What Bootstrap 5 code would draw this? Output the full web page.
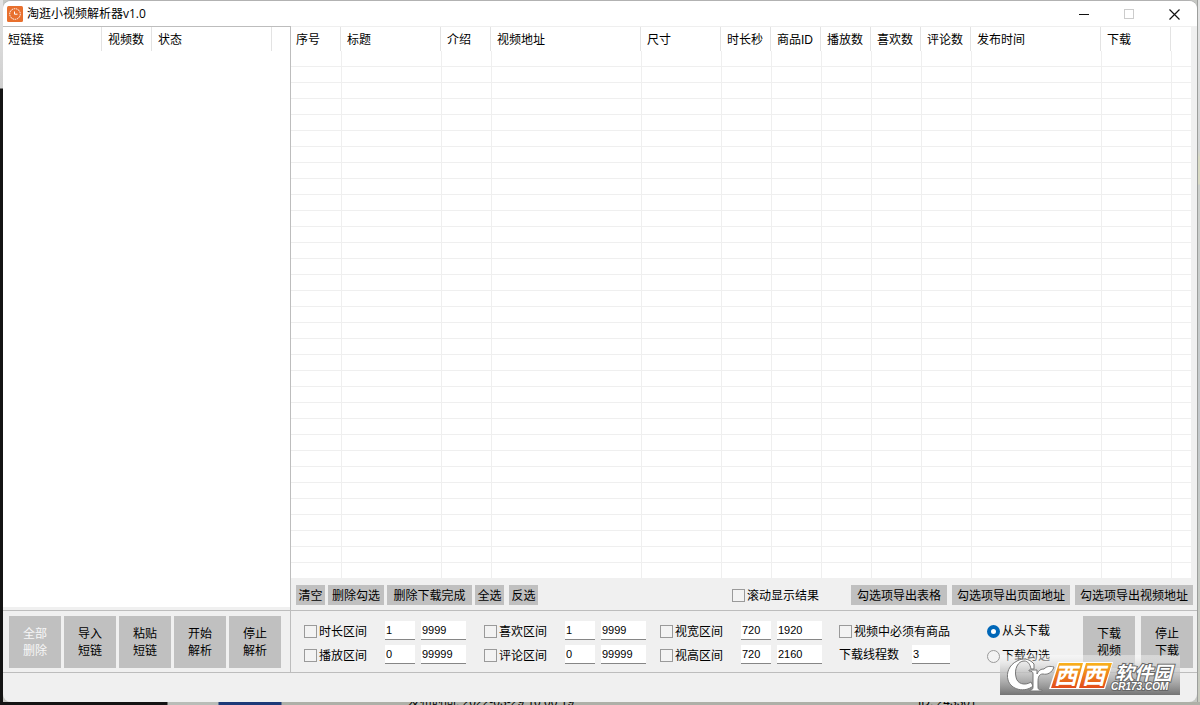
<!DOCTYPE html>
<html lang="zh-CN">
<head>
<meta charset="utf-8">
<meta name="viewport" content="width=device-width, initial-scale=1">
<title>淘逛小视频解析器v1.0</title>
<link href="https://cdn.jsdelivr.net/npm/bootstrap@5.3.0/dist/css/bootstrap.min.css" rel="stylesheet">
<style>
  body { font-family: "Liberation Sans", "Noto Sans CJK SC", sans-serif; font-size: 12px; line-height: 16px; color: #000; background: #c6c8c4; }
  .desk-left { width: 3px; background: linear-gradient(#e4e4e4, #cfcfcf 88px, #141414 89px); }
  .desk-right { width: 3px; border-left: 1px solid #9c9e9c; background: linear-gradient(#e4e4e4, #d3d5d5 150px, #d9dac4 158px, #d9dac4 184px, #cdd0cc 185px, #c4c9cc 420px, #c8cbbf); }
  .desk-bottom { height: 3px; background: linear-gradient(90deg, #141414 167px, #b9bdb8 168px, #b9bdb8 218px, #1d3a78 219px, #1d3a78 281px, #aeb0a8 282px); }
  .peek { line-height: 12px; margin-top: -6px; white-space: nowrap; }
  .peek-a { width: 510px; }
  .peek-start { margin-left: 408px; }
  .app { background: #f0f0f0; border-top: 1px solid #b2b2b2; border-radius: 8px; min-width: 0; }
  .titlebar { height: 25px; background: #fff; border-radius: 8px 8px 0 0; font-family: "Open Sans", "Noto Sans CJK SC", sans-serif; }
  .winbtn { width: 45px; height: 24px; border: 0; background: none; padding: 0; line-height: 20px; }
  .left-pane { width: 288px; border-right: 1px solid #bdbdbd; }
  .left-list { border-top: 1px solid #bdbdbd; background: #fff; margin-bottom: 3px; }
  .right-list { border-top: 1px solid #efefef; background: #fff; margin-right: 6px; }
  .listview { table-layout: fixed; width: 100%; border-collapse: separate; border-spacing: 0; }
  .listview th { height: 24px; padding: 2px 0 0 5px; font-weight: 400; white-space: nowrap; vertical-align: middle;
    background: linear-gradient(#e3e3e3, #e3e3e3) no-repeat right 1px top / 1px 100%; }
  .listview th:last-child { background: none; }
  .listview td { height: 16px; padding: 0; border-right: 1px solid #efefef; border-bottom: 1px solid #efefef; }
  .listview td:last-child { border-right: 0; }
  .listview tr:last-child td { height: 15px; border-bottom: 0; }
  .toolbar { height: 32px; padding: 1px 4px 0 5px; }
  .flat { border: 0; border-radius: 0; background: #c0c0c0; color: #000; padding: 2px 0 0; height: 20px; line-height: 18px; white-space: nowrap; }
  .gap-a { gap: 3px; } .gap-b { gap: 5px; }
  .w-s { width: 29px; } .w-m { width: 56px; } .w-l { width: 85px; } .w-x { width: 96px; } .w-xl { width: 118px; }
  .tile { width: 52px; height: 52px; line-height: 17px; }
  .tile:disabled { color: #f7f7f7; }
  .panel { height: 63px; border-top: 1px solid #bdbdbd; border-bottom: 1px solid #bdbdbd; }
  .tiles-left { padding: 5px 0 0 6px; }
  .tiles-right { padding: 5px 4px 0 0; gap: 6px; }
  .statusbar { height: 29px; }
  .tick { appearance: none; width: 13px; height: 13px; margin: 0; border: 1px solid #9a9a9a; background: #f3f3f3; flex: none; }
  .tick[type=radio] { border-radius: 50%; }
  .tick[type=radio]:checked { border: 4px solid #0067b8; background: #fff; }
  .opt { gap: 2px; white-space: nowrap; padding-top: 2px; }
  .scroll-opt { margin-right: 32px; }
  .filters { padding: 10px 0 0 13px; }
  .pair { display: grid; grid-template-columns: 75px 30px 45px; column-gap: 6px; row-gap: 5px; align-items: center; margin-right: 18px; }
  .pair + .pair { margin-right: 14px; }
  .edit { height: 19px; min-width: 0; width: 100%; border: 0; border-bottom: 1px solid #868686; padding: 0 0 1px 1px; font-size: 11px; background: #fff; color: #000; border-radius: 0; }
  .extra { display: grid; grid-template-columns: 67px 38px; column-gap: 6px; row-gap: 5px; align-items: center; margin: 0 37px 0 3px; }
  .extra > .opt { grid-column: span 2; height: 19px; }
  .modes { gap: 7px; }
  .stamp { right: 17px; bottom: 7px; pointer-events: none; }
</style>
</head>
<body class="vh-100 d-flex flex-column overflow-hidden">
<div class="d-flex flex-grow-1">
  <div class="desk-left flex-shrink-0"></div>
  <div class="app flex-grow-1 d-flex flex-column position-relative">
    <header class="titlebar d-flex align-items-center">
      <svg class="ms-1 me-1 flex-shrink-0" width="16" height="16" viewBox="0 0 16 16" aria-hidden="true">
        <rect width="16" height="16" rx="1.500" fill="#e8702e"/>
        <circle cx="8" cy="8" r="5.3" fill="none" stroke="#fff" stroke-width="1" stroke-dasharray="1.6 .7"/>
        <path d="M7.500 5.500v2.700H10.500" fill="none" stroke="#fff" stroke-width="1"/>
      </svg>
      <span class="flex-grow-1">淘逛小视频解析器v1.0</span>
      <button class="winbtn" aria-label="最小化"><svg width="11" height="11"><path d="M0 5.500h10" stroke="#111"/></svg></button>
      <button class="winbtn" aria-label="最大化" disabled><svg width="11" height="11"><rect x=".5" y=".5" width="9" height="9" fill="none" stroke="#ccc"/></svg></button>
      <button class="winbtn" aria-label="关闭"><svg width="11" height="11"><path d="M.5 .5l10 10M10.500 .5l-10 10" stroke="#111" stroke-width="1.2"/></svg></button>
    </header>

    <main class="flex-grow-1 d-flex">
      <section class="left-pane flex-shrink-0 d-flex">
        <div class="left-list flex-grow-1">
          <table class="listview">
            <colgroup><col style="width:100px"><col style="width:50px"><col style="width:120px"><col></colgroup>
            <thead><tr><th>短链接</th><th>视频数</th><th>状态</th><th></th></tr></thead>
          </table>
        </div>
      </section>
      <section class="flex-grow-1 d-flex flex-column">
        <div class="right-list flex-grow-1">
          <table class="listview" id="videos">
            <colgroup><col style="width:51px"><col style="width:100px"><col style="width:50px"><col style="width:150px"><col style="width:80px"><col style="width:50px"><col style="width:50px"><col style="width:50px"><col style="width:50px"><col style="width:50px"><col style="width:130px"><col style="width:70px"><col></colgroup>
            <thead><tr><th>序号</th><th>标题</th><th>介绍</th><th>视频地址</th><th>尺寸</th><th>时长秒</th><th>商品ID</th><th>播放数</th><th>喜欢数</th><th>评论数</th><th>发布时间</th><th>下载</th><th></th></tr></thead>
            <tbody></tbody>
          </table>
        </div>
        <div class="toolbar d-flex align-items-center">
          <div class="d-flex flex-grow-1 gap-b">
            <div class="d-flex gap-a">
              <button class="flat w-s">清空</button>
              <button class="flat w-m">删除勾选</button>
              <button class="flat w-l">删除下载完成</button>
              <button class="flat w-s">全选</button>
            </div>
            <button class="flat w-s">反选</button>
          </div>
          <label class="opt scroll-opt d-flex align-items-center"><input class="tick" type="checkbox">滚动显示结果</label>
          <div class="d-flex gap-b">
            <button class="flat w-x">勾选项导出表格</button>
            <button class="flat w-xl">勾选项导出页面地址</button>
            <button class="flat w-xl">勾选项导出视频地址</button>
          </div>
        </div>
      </section>
    </main>

    <section class="panel d-flex">
      <div class="left-pane tiles-left gap-a flex-shrink-0 d-flex align-items-start">
        <button class="flat tile" disabled>全部<br>删除</button>
        <button class="flat tile">导入<br>短链</button>
        <button class="flat tile">粘贴<br>短链</button>
        <button class="flat tile">开始<br>解析</button>
        <button class="flat tile">停止<br>解析</button>
      </div>
      <form class="filters flex-grow-1 d-flex align-items-start">
        <div class="pair">
          <label class="opt d-flex align-items-center"><input class="tick" type="checkbox">时长区间</label>
          <input class="edit" value="1" aria-label="时长下限"><input class="edit" value="9999" aria-label="时长上限">
          <label class="opt d-flex align-items-center"><input class="tick" type="checkbox">播放区间</label>
          <input class="edit" value="0" aria-label="播放下限"><input class="edit" value="99999" aria-label="播放上限">
        </div>
        <div class="pair">
          <label class="opt d-flex align-items-center"><input class="tick" type="checkbox">喜欢区间</label>
          <input class="edit" value="1" aria-label="喜欢下限"><input class="edit" value="9999" aria-label="喜欢上限">
          <label class="opt d-flex align-items-center"><input class="tick" type="checkbox">评论区间</label>
          <input class="edit" value="0" aria-label="评论下限"><input class="edit" value="99999" aria-label="评论上限">
        </div>
        <div class="pair">
          <label class="opt d-flex align-items-center"><input class="tick" type="checkbox">视宽区间</label>
          <input class="edit" value="720" aria-label="视宽下限"><input class="edit" value="1920" aria-label="视宽上限">
          <label class="opt d-flex align-items-center"><input class="tick" type="checkbox">视高区间</label>
          <input class="edit" value="720" aria-label="视高下限"><input class="edit" value="2160" aria-label="视高上限">
        </div>
        <div class="extra">
          <label class="opt d-flex align-items-center"><input class="tick" type="checkbox">视频中必须有商品</label>
          <label for="threads">下载线程数</label><input class="edit" id="threads" value="3">
        </div>
        <div class="modes d-flex flex-column">
          <label class="opt d-flex align-items-center"><input class="tick" type="radio" name="mode" checked>从头下载</label>
          <label class="opt d-flex align-items-center"><input class="tick" type="radio" name="mode">下载勾选</label>
        </div>
      </form>
      <div class="tiles-right d-flex align-items-start">
        <button class="flat tile">下载<br>视频</button>
        <button class="flat tile">停止<br>下载</button>
      </div>
    </section>
    <footer class="statusbar"></footer>

    <svg class="stamp position-absolute" width="180" height="40" viewBox="0 0 180 40" role="img" aria-label="西西软件园">
      <defs>
        <linearGradient id="veil" x2="0" y2="1"><stop offset="0" stop-color="#fff" stop-opacity=".35"/><stop offset=".35" stop-color="#ccc" stop-opacity=".75"/><stop offset="1" stop-color="#747474"/></linearGradient>
        <linearGradient id="flame" x2="0" y2="1"><stop offset="0" stop-color="#f9b21c"/><stop offset="1" stop-color="#e24a1a"/></linearGradient>
      </defs>
      <rect width="180" height="40" fill="url(#veil)"/>
      <!-- round emblem: a thick crescent with a sprout -->
      <path d="M34 9C29 3 22 3 17 6 9 10 6 18 8 25c3 10 17 13 25 6l-2-4c-6 4-14 2-15-5-2-8 2-16 8-16 4 0 6 3 7 8h3z" fill="#fff" stroke="#777"/>
      <path d="M29 15h8v4c2-4 4-5 7-5 3-3 6-3 10-2-2 6-7 8-11 7-4 0-5 3-5 8v5c0 3 2 3 4 3v1H30v-1c2 0 3-1 3-3V19c0-2-1-3-4-3z" fill="#fff" stroke="#777"/>
      <path d="M58 7h55l-8 27H49z" fill="#fff"/>
      <path d="M59 8h24l-7 25H51zM86 8h26l-8 25H79z" fill="url(#flame)"/>
      <g font-family="'Noto Sans CJK SC', sans-serif" font-weight="700" font-style="italic" fill="#fff">
        <text x="54" y="29" font-size="23">西</text>
        <text x="82" y="29" font-size="23">西</text>
        <g stroke="#666" stroke-width="2" paint-order="stroke">
          <text x="115" y="25" font-size="19">软件园</text>
          <text x="111" y="35" font-size="10" font-family="'Liberation Sans', sans-serif">CR173.COM</text>
        </g>
      </g>
    </svg>
  </div>
  <div class="desk-right flex-shrink-0"></div>
</div>
<div class="desk-bottom d-flex overflow-hidden flex-shrink-0">
  <div class="peek peek-start peek-a flex-shrink-0">发布时间: 2022-03-29 10 00 19</div>
  <div class="peek">ID: 243301</div>
</div>
<script src="https://cdn.jsdelivr.net/npm/bootstrap@5.3.0/dist/js/bootstrap.bundle.min.js"></script>
<script>
  document.querySelector('#videos tbody').innerHTML = ('<tr>' + '<td></td>'.repeat(13) + '</tr>').repeat(33);
</script>
</body>
</html>
